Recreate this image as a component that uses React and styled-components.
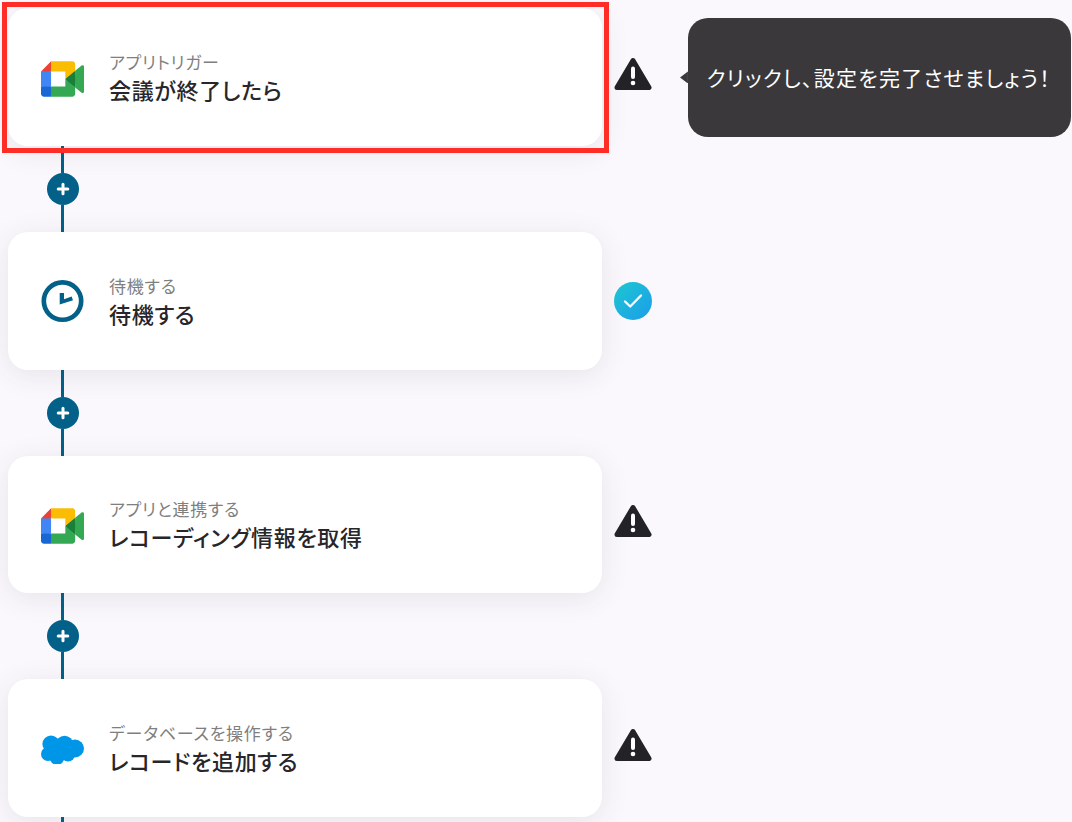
import React from 'react'
import styled, { createGlobalStyle } from 'styled-components'

const Global = createGlobalStyle`
html, body {
  margin: 0;
  padding: 0;
  height: 822px;
  overflow: hidden;
  background: #faf8fc;
  font-family: "Noto Sans CJK JP", "Noto Sans", sans-serif;
  font-feature-settings: "palt";
}
`

const Page = styled.div`
height: 822px;
overflow: hidden;
padding: 8.4px 0 0 8px;
box-sizing: border-box;
display: flex;
flex-direction: column;
`

const Row = styled.div`
position: relative;
display: flex;
align-items: center;
gap: 12px;
flex: none;
`

const Card = styled.div`
width: 594px;
height: 137.6px;
box-sizing: border-box;
padding: 0 0 0 33px;
display: flex;
align-items: center;
gap: 25px;
background: #fff;
border-radius: 20px;
box-shadow: 0 5px 28px rgba(60, 55, 80, 0.1);
`

const IconBox = styled.div`
width: 43px;
height: 46px;
flex: none;
display: flex;
align-items: center;
justify-content: center;
padding-top: 3px;
`

const Texts = styled.div`
display: flex;
flex-direction: column;
`

const Label = styled.span`
font-size: 17px;
line-height: 24px;
letter-spacing: 0.045em;
color: #7f7f7f;
`

const Title = styled.span`
font-size: 22px;
line-height: 30px;
font-weight: 500;
letter-spacing: 0.03em;
color: #27262a;
`

const Highlight = styled.div`
position: absolute;
top: -6.4px;
left: -6px;
width: 607px;
height: 151px;
box-sizing: border-box;
border: 5.5px solid #ff2d26;
pointer-events: none;
`

const Status = styled.div`
width: 38px;
height: 38px;
flex: none;
display: flex;
align-items: center;
justify-content: center;
`

const Warn = styled(Status)`
margin-bottom: 6px;
`

const Done = styled(Status)`
border-radius: 50%;
margin-top: 1px;
background: linear-gradient(135deg, #1cc8d0 0%, #1c9ceb 100%);
`

const Tooltip = styled.div`
position: absolute;
left: 680px;
top: 9.6px;
width: 383px;
height: 119px;
box-sizing: border-box;
padding: 0 0 0 18.5px;
display: flex;
align-items: center;
background: #3a383b;
border-radius: 20px;
color: #fff;
font-size: 21px;
letter-spacing: 0.06em;
white-space: nowrap;

&::before {
  content: '';
  position: absolute;
  left: -8px;
  top: 50%;
  width: 12px;
  height: 12px;
  margin-top: -6px;
  background: #3a383b;
  clip-path: polygon(0 50%, 66% 0, 66% 100%);
}
`

const Connector = styled.div`
width: 32px;
height: 86px;
margin-left: 39px;
flex: none;
display: flex;
flex-direction: column;
align-items: center;
`

const Line = styled.div`
width: 3px;
margin-right: 1px;
flex: 1;
background: #036088;
`

const Plus = styled.button`
width: 32px;
height: 32px;
flex: none;
padding: 0;
border: 0;
border-radius: 50%;
background: #036088;
display: flex;
align-items: center;
justify-content: center;
`

function MeetIcon() {
  return (
    <svg width="43" height="36" viewBox="0 0 87.5 72">
      <path fill="#188038" d="M49.5 36l8.53 9.75 11.47 7.33 2-17.02-2-16.64-11.69 6.44z" />
      <path fill="#1967d2" d="M0 51.5V66c0 3.315 2.685 6 6 6h14.5l3-10.96-3-9.54-9.95-3z" />
      <path fill="#ea4335" d="M20.5 0L0 20.5l10.55 3 9.95-3 2.95-9.41z" />
      <path fill="#4285f4" d="M20.5 20.5H0v31h20.5z" />
      <path fill="#34a853" d="M82.6 8.68L69.5 19.42v33.66l13.16 10.79c1.97 1.54 4.85.135 4.85-2.37V11c0-2.535-2.945-3.925-4.91-2.32zM49.5 36v15.5h-29V72h43c3.315 0 6-2.685 6-6V53.08z" />
      <path fill="#fbbc04" d="M63.5 0h-43v20.5h29V36l20-16.57V6c0-3.315-2.685-6-6-6z" />
    </svg>
  )
}

function ClockIcon() {
  return (
    <svg width="46" height="46" viewBox="0 0 46 46">
      <circle cx="23" cy="22" r="20" fill="none" stroke="#036088" strokeWidth="5" />
      <path d="M20 13.5h4.6v6.5l8.2-2.9 1.4 4.1-14.2 4.6z" fill="#036088" />
    </svg>
  )
}

function CloudIcon() {
  return (
    <svg width="43" height="30" viewBox="0 -1 43 30" fill="#0096e8">
      <circle cx="10" cy="9" r="8.6" />
      <circle cx="23.5" cy="9.5" r="8.8" />
      <circle cx="34" cy="13.5" r="9" />
      <circle cx="7" cy="19" r="7" />
      <circle cx="16" cy="22.4" r="7.4" />
      <circle cx="27" cy="19.5" r="7" />
      <rect x="6" y="8" width="28" height="14" />
    </svg>
  )
}

function WarnIcon() {
  return (
    <svg width="38" height="34" viewBox="0 0 38 34">
      <path d="M19 3.5 L35 30.5 H3 Z" fill="#232226" stroke="#232226" strokeWidth="5" strokeLinejoin="round" />
      <rect x="17" y="9.5" width="4" height="12.5" rx="2" fill="#fff" />
      <circle cx="19" cy="26" r="2.3" fill="#fff" />
    </svg>
  )
}

const steps = [
  { icon: MeetIcon, label: 'アプリトリガー', title: '会議が終了したら', status: 'warn', active: true },
  { icon: ClockIcon, label: '待機する', title: '待機する', status: 'done' },
  { icon: MeetIcon, label: 'アプリと連携する', title: 'レコーディング情報を取得', status: 'warn' },
  { icon: CloudIcon, label: 'データベースを操作する', title: 'レコードを追加する', status: 'warn' }
]

export default function App() {
  return (
    <Page>
      <Global />
      {steps.map((step, x) => {
        const Icon = step.icon
        return (
          <React.Fragment key={x}>
            <Row>
              <Card>
                <IconBox><Icon /></IconBox>
                <Texts>
                  <Label>{step.label}</Label>
                  <Title>{step.title}</Title>
                </Texts>
              </Card>
              {step.status === 'done' ? (
                <Done>
                  <svg width="20" height="16" viewBox="0 0 20 16">
                    <path d="M2 8.5l5.2 5L18 2.5" fill="none" stroke="#fff" strokeWidth="2.3" strokeLinecap="round" strokeLinejoin="round" />
                  </svg>
                </Done>
              ) : (
                <Warn><WarnIcon /></Warn>
              )}
              {step.active && <Highlight />}
              {step.active && <Tooltip>クリックし、設定を完了させましょう！</Tooltip>}
            </Row>
            <Connector>
              <Line />
              <Plus>
                <svg width="16" height="16" viewBox="0 0 16 16">
                  <path d="M8 3.2v9.6M3.2 8h9.6" stroke="#fff" strokeWidth="3" strokeLinecap="round" />
                </svg>
              </Plus>
              <Line />
            </Connector>
          </React.Fragment>
        )
      })}
    </Page>
  )
}
